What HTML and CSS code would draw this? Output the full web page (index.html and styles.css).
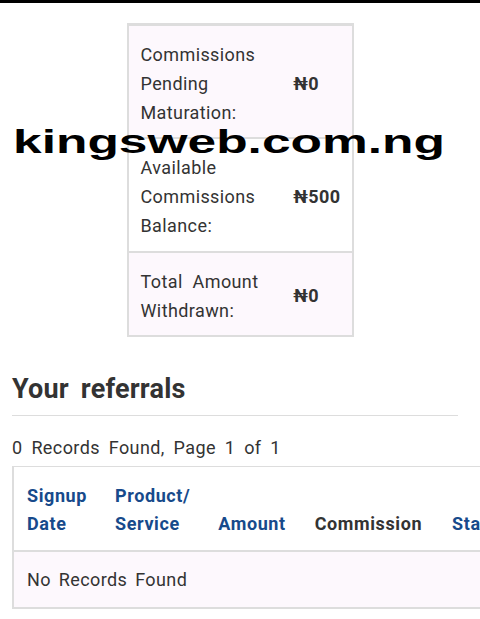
FILE: index.html
```html
<!DOCTYPE html>
<html lang="en">
  <head>
    <meta charset="utf-8" />
    <meta name="viewport" content="width=device-width, initial-scale=1" />
    <title>Affiliate Referrals</title>
    <link rel="stylesheet" href="styles.css">
  </head>
  <body>
    <div class="topbar"></div>
    <table class="stats">
      <tr class="odd">
        <td class="stat-label">Commissions Pending Maturation:</td>
        <td class="stat-value">₦0</td>
      </tr>
      <tr>
        <td class="stat-label">Available Commissions Balance:</td>
        <td class="stat-value">₦500</td>
      </tr>
      <tr class="odd">
        <td class="stat-label">Total Amount Withdrawn:</td>
        <td class="stat-value">₦0</td>
      </tr>
    </table>

    <div class="referrals">
      <h2>Your referrals</h2>
      <p class="records-count">0 Records Found, Page 1 of 1</p>
      <table class="referral-table">
        <thead>
          <tr>
            <th><a href="#">Signup Date</a></th>
            <th><a href="#">Product/ Service</a></th>
            <th><a href="#">Amount</a></th>
            <th class="plain">Commission</th>
            <th><a href="#">Status</a></th>
          </tr>
        </thead>
        <tbody>
          <tr>
            <td colspan="5">No Records Found</td>
          </tr>
        </tbody>
      </table>
    </div>

    <div class="watermark">kingsweb.com.ng</div>
  </body>
</html>
```

FILE: styles.css
```css
body {
  font-family: Roboto, "Noto Sans", sans-serif;
  font-size: 18px;
  line-height: 1.6;
  letter-spacing: 0.4px;
  word-spacing: 3px;
  color: #333;
  margin: 0;
  overflow-x: hidden;
}
.topbar {
  height: 3px;
  background-color: #000;
}
.stats {
  width: 227px;
  margin: 20px auto 0;
  border: 2px solid #ddd;
  border-top-width: 3px;
  border-spacing: 0;
}
.stats tr.odd td {
  background-color: #fdf8fd;
}
.stats tr + tr td {
  border-top: 2px solid #ddd;
}
.stat-label {
  width: 128px;
  padding: 15px 13px 10px 12px;
  vertical-align: middle;
  word-spacing: 5px;
}
.stat-value {
  padding: 15px 11px 10px 15px;
  font-weight: bold;
  vertical-align: middle;
}
.referrals {
  padding: 0 12px;
  margin-top: 36px;
}
h2 {
  font-size: 27px;
  line-height: 1.2;
  letter-spacing: 0.2px;
  word-spacing: 5px;
  margin: 0 10px 0 0;
  padding-bottom: 9px;
  border-bottom: 1px solid #ddd;
}
.records-count {
  margin: 18px 0 3px;
  word-spacing: 4px;
}
.referral-table {
  width: 100%;
  border-spacing: 0;
  border-top: 1px solid #ddd;
  border-left: 2px solid #ddd;
  border-bottom: 2px solid #ddd;
}
.referral-table th {
  text-align: left;
  vertical-align: bottom;
  letter-spacing: 0.6px;
  padding: 15px 14px 11px;
  border-bottom: 2px solid #ddd;
}
.referral-table th:first-child {
  padding-left: 13px;
}
.referral-table th.plain {
  padding-left: 15px;
  padding-right: 16px;
}
.referral-table th a {
  color: #174a8b;
  text-decoration: none;
}
.referral-table td {
  padding: 14px 14px 12px 13px;
  background-color: #fdf8fd;
}
.watermark {
  position: absolute;
  top: 125px;
  left: 13px;
  font-family: "Liberation Sans", Arial, sans-serif;
  font-size: 33px;
  line-height: 33px;
  font-weight: bold;
  letter-spacing: 0;
  word-spacing: 0;
  color: #000;
  white-space: nowrap;
  transform: scaleX(1.56);
  transform-origin: left top;
}
```
